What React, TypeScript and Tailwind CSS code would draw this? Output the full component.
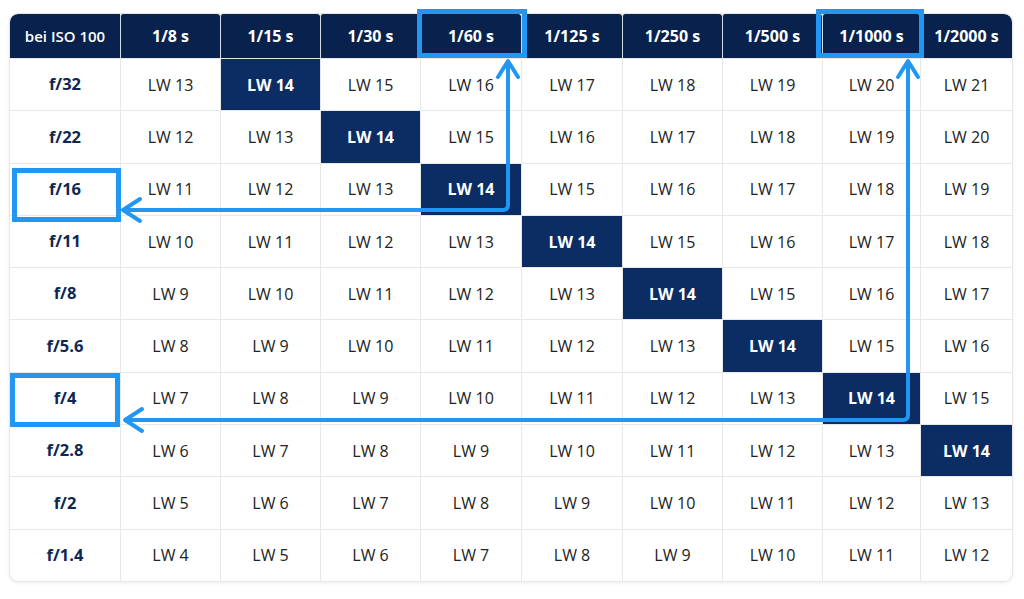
const shutter = ['1/8 s', '1/15 s', '1/30 s', '1/60 s', '1/125 s', '1/250 s', '1/500 s', '1/1000 s', '1/2000 s']
const apertures = ['f/32', 'f/22', 'f/16', 'f/11', 'f/8', 'f/5.6', 'f/4', 'f/2.8', 'f/2', 'f/1.4']

const cols = 'grid grid-cols-[110px_100px_100px_100px_101px_101px_100px_100px_98px_92px]'

function Overlay() {
  const blue = '#2196f3'
  return (
    <svg className="pointer-events-none absolute inset-0" width="1024" height="599" viewBox="0 0 1024 599" fill="none">
      <g stroke={blue} strokeWidth="5">
        <rect x="419.5" y="11.5" width="105" height="44" />
        <rect x="818.5" y="11.5" width="103" height="44" />
        <rect x="14.5" y="170.5" width="104" height="49" />
        <rect x="12.5" y="375.5" width="105" height="49" />
      </g>
      <g stroke={blue} strokeWidth="4" strokeLinecap="round" strokeLinejoin="round">
        <path d="M124 210 H503 Q508 210 508 205 V62" />
        <path d="M498 77 L508 61 L518 77" />
        <path d="M140 199 L123 210 L140 221" />
        <path d="M126 420 H903 Q908 420 908 415 V62" />
        <path d="M898 77 L908 61 L918 77" />
        <path d="M142 409 L125 420 L142 431" />
      </g>
    </svg>
  )
}

export default function App() {
  return (
    <div className="relative h-[599px] w-[1024px] bg-white pl-[10px] pt-[14px] font-['Open_Sans','Noto_Sans',sans-serif]">
      <div className="w-[1002px] overflow-hidden rounded-lg bg-white shadow-[0_1px_4px_rgba(0,0,0,0.12)] ring-1 ring-[#e5e7eb]">
        <div className={`${cols} h-[44px]`}>
          <div className="flex items-center justify-center rounded-tl-lg bg-[#08224d] text-[15px] font-semibold text-white">
            bei ISO 100
          </div>
          {shutter.map((s, i) => (
            <div
              key={s}
              className={`flex items-center justify-center rounded-t-[3px] border-l border-[#d6dbe3] bg-[#08224d] text-[16px] font-bold text-white ${i === shutter.length - 1 ? 'rounded-tr-lg' : ''}`}>
              {s}
            </div>
          ))}
        </div>
        {apertures.map((f, r) => (
          <div key={f} className={`${cols} h-[52.3px] border-t border-[#e8e8e8]`}>
            <div className="flex items-center justify-center text-[16.5px] font-bold text-[#0d2853]">{f}</div>
            {shutter.map((s, c) => {
              const lw = 13 - r + c
              const hi = lw === 14
              return (
                <div
                  key={s}
                  className={`flex items-center justify-center border-l border-[#e8e8e8] text-[16px] ${hi ? 'bg-[#0b2d63] font-bold text-white' : 'text-[#222]'}`}>
                  LW {lw}
                </div>
              )
            })}
          </div>
        ))}
      </div>
      <Overlay />
    </div>
  )
}
